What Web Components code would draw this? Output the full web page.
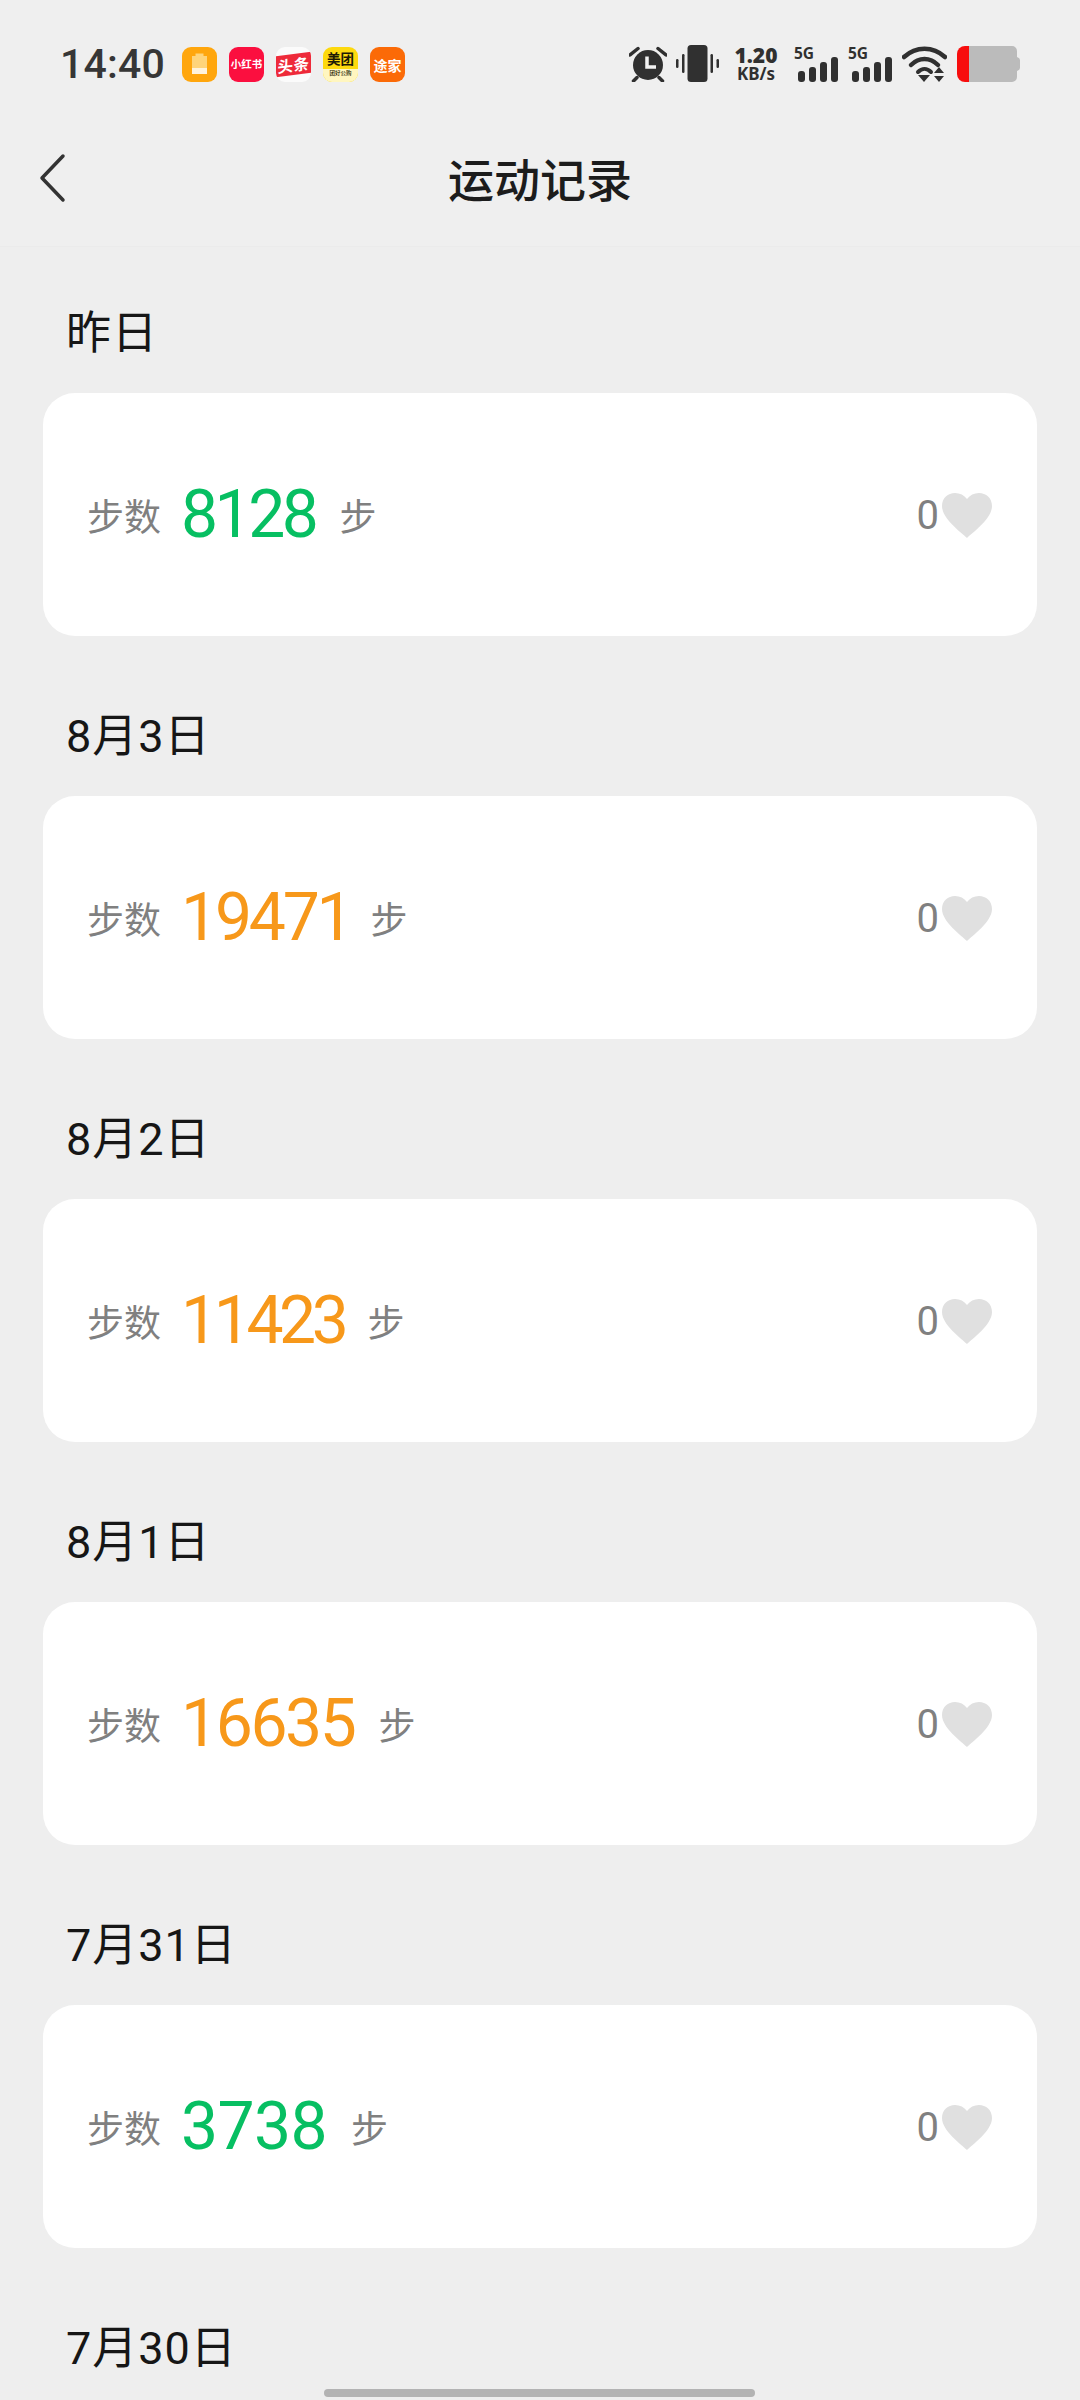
<!DOCTYPE html>
<html lang="zh"><head><meta charset="utf-8"><title>运动记录</title>
<style>
html,body{margin:0;padding:0;background:#eee}
body{width:1080px;height:2400px;overflow:hidden;position:relative;font-family:Roboto,"Noto Sans CJK SC",sans-serif}
</style></head><body>
<status-bar></status-bar>
<nav-bar>运动记录</nav-bar>
<main>
<day-section day="昨日" steps="8128" tone="green" track="-3.5" gap="24"></day-section>
<day-section day="8月3日" steps="19471" tone="orange" track="-3.2" gap="20"></day-section>
<day-section day="8月2日" steps="11423" tone="orange" track="-4.4" gap="23"></day-section>
<day-section day="8月1日" steps="16635" tone="orange" track="-2.4" gap="24"></day-section>
<day-section day="7月31日" steps="3738" tone="green" track="-0.6" gap="24"></day-section>
<day-section day="7月30日"></day-section>
</main>
<home-indicator></home-indicator>
<script>
const def=(name,html)=>customElements.define(name,class extends HTMLElement{
  connectedCallback(){
    if(this.shadowRoot)return;
    const r=this.attachShadow({mode:'open'});
    r.innerHTML=typeof html==='function'?html(this):html;
  }
});
def('app-icon',e=>`<style>
:host{display:flex;width:35px;height:35px;border-radius:9px;overflow:hidden;align-items:center;justify-content:center;flex-direction:column;font-family:"Noto Sans CJK SC",sans-serif;font-weight:700;line-height:1;white-space:nowrap;background:${e.getAttribute('bg')};color:${e.getAttribute('fg')||'#fff'};font-size:${e.getAttribute('fs')||'11px'}}
</style><slot></slot>`);
def('status-bar',`<style>
:host{display:flex;box-sizing:border-box;height:100px;padding:46px 60px 0 60px;align-items:flex-start;background:#efefef;color:#303030;font-family:"Noto Sans",sans-serif}
.time{font:500 41px/37px Roboto,sans-serif;width:122px;color:#363636;letter-spacing:.2px}
.apps{display:flex;gap:12px;margin-top:1px}
.right{margin-left:auto;display:flex;align-items:flex-start}
svg{display:block;flex:none}
.speed{width:44px;margin-left:15px;font-weight:700;text-align:center;white-space:nowrap;display:flex;flex-direction:column;margin-right:2px}
.speed b{font-size:21px;line-height:19px}
.speed i{font-style:normal;font-size:17px;line-height:17px}
.net{position:relative;width:42px;height:36px;margin-left:16px}
.net+.net{margin-left:12px}
.net span{position:absolute;left:-2px;top:-1px;font-size:15.5px;line-height:16px;font-weight:700}
.net svg{width:42px;height:36px}
.wifi{margin-left:10px}.bat{margin-left:10px}
.tt{display:flex;transform:skewY(-7deg);background:#ee2a3a;color:#fff;width:35px;height:21px;align-items:center;justify-content:center;font-size:15.500px;letter-spacing:.5px}
</style>
<div class="time">14:40</div>
<div class="apps">
<app-icon bg="#ffa60d"><svg width="35" height="35" viewBox="0 0 35 35"><path d="M10 9h3.500V6.500h8V9H25v18H10z" fill="#ffd47a"/><path d="M10 21h15v6H10z" fill="#fff3dc"/></svg></app-icon>
<app-icon bg="#fb0f3f" fs="10.500px">小红书</app-icon>
<app-icon bg="#fbfbfb"><div class="tt">头条</div></app-icon>
<app-icon bg="#fdd90e" fg="#1d1a05" fs="13.500px"><div style="margin-top:5px">美团</div><div style="font-size:5.500px;font-weight:500;background:#fff6c0;width:35px;text-align:center;margin-top:4px;padding:2px 0 6px">团好公购</div></app-icon>
<app-icon bg="#fb6a07" fs="14px">途家</app-icon>
</div>
<div class="right">
<svg width="38" height="36" viewBox="0 0 38 36" fill="#303030"><circle cx="19" cy="19" r="15"/><path d="M1 9 9 2.500M37 9 29 2.500M8 31.500 4.500 35M30 31.500 33.500 35" stroke="#303030" stroke-width="3.500" fill="none" stroke-linecap="round"/><path d="M18 10.500V21h9" stroke="#f2f2f2" stroke-width="3.500" fill="none"/></svg>
<svg width="43" height="37" viewBox="0 0 43 37" style="margin-left:9px;margin-top:-1px" fill="#303030"><rect x="11.500" y="0" width="20" height="37" rx="3.500"/><rect x="6" y="9" width="2.500" height="19" rx="1.200"/><rect x="34.500" y="9" width="2.500" height="19" rx="1.200"/><rect x="0" y="14" width="2.500" height="9" rx="1.200"/><rect x="40.500" y="14" width="2.500" height="9" rx="1.200"/></svg>
<div class="speed"><b>1.20</b><i>KB/s</i></div>
<div class="net"><span>5G</span><svg viewBox="0 0 42 36" fill="#303030"><rect x="2" y="25" width="7" height="11" rx="3"/><rect x="13" y="21" width="7" height="15" rx="3"/><rect x="24" y="16" width="7" height="20" rx="3"/><rect x="35" y="11" width="7" height="25" rx="3"/></svg></div>
<div class="net"><span>5G</span><svg viewBox="0 0 42 36" fill="#303030"><rect x="2" y="25" width="7" height="11" rx="3"/><rect x="13" y="21" width="7" height="15" rx="3"/><rect x="24" y="16" width="7" height="20" rx="3"/><rect x="35" y="11" width="7" height="25" rx="3"/></svg></div>
<svg class="wifi" width="45" height="36" viewBox="0 0 45 36" fill="none" stroke="#303030" stroke-width="4.500" stroke-linecap="round"><path d="M2 11C14 0 31 0 43 11"/><path d="M9 19C17 11 28 11 36 19"/><path d="M16 26C20 22 25 22 29 26" stroke-width="4"/><path d="M16 29h12l-6 7z" fill="#303030" stroke="none"/><path d="M36 21l5 6H31zM36 36l5-6H31z" fill="#303030" stroke="none" transform="translate(1 0)"/></svg>
<svg class="bat" width="63" height="36" viewBox="0 0 63 36"><path d="M10 0H55a5 5 0 0 1 5 5V11q3 1 3 3V22q0 2-3 3V31a5 5 0 0 1-5 5H10z" fill="#bbb"/><path d="M12 0H8a8 8 0 0 0-8 8V28a8 8 0 0 0 8 8h4z" fill="#f70d0d"/></svg>
</div>`);
def('nav-bar',`<style>
:host{display:flex;position:relative;box-sizing:border-box;height:147px;border-bottom:1px solid #ebebeb;background:#efefef;padding:7px 0 0;align-items:center;justify-content:center;font:500 46px/60px "Noto Sans CJK SC",sans-serif;color:#1c1c1c}
svg{position:absolute;left:38px;top:53px}
</style><svg width="30" height="50" viewBox="0 0 30 50" fill="none" stroke="#333" stroke-width="3.500" stroke-linecap="round" stroke-linejoin="round"><path d="M25 3 4 25l21 22"/></svg><slot></slot>`);
def('step-card',e=>`<style>
:host{display:flex;box-sizing:border-box;height:243px;background:#fff;border-radius:32px;padding:0 45px 0 44px;align-items:center;color:#808080;font-family:Roboto,"Noto Sans CJK SC",sans-serif}
.l{font:400 37px/50px "Noto Sans CJK SC",sans-serif}
.n{font:400 66px/80px Roboto,sans-serif;letter-spacing:${e.getAttribute('track')}px;margin:0 ${e.getAttribute('gap')}px 0 20px;color:${e.getAttribute('tone')==='green'?'#07bf62':'#f7981a'}}
.z{margin-left:auto;font:400 40px/50px Roboto,sans-serif;color:#808080;margin-top:2px}
svg{display:block;margin-left:3px;margin-top:2px}
</style><span class="l">步数</span><span class="n">${e.getAttribute('steps')}</span><span class="l">步</span><span class="z">0</span>
<svg width="50" height="45" viewBox="0 0 50 45"><path d="M25 45C20 40 0 26 0 13 0 5 6 0 13 0c5 0 9 2 12 6 3-4 7-6 12-6 7 0 13 5 13 13 0 13-20 27-25 32z" fill="#e0e0e0"/></svg>`);
def('day-section',e=>{
 const s=e.getAttribute('steps');
 return `<style>
:host{display:block;box-sizing:border-box;height:${s?'403px':'auto'};padding:57px 43px 0}
h2{margin:0 0 ${s?29:0}px 23px;font:400 45px/60px Roboto,"Noto Sans CJK SC",sans-serif;letter-spacing:1px;color:#161616}
</style><h2>${e.getAttribute('day')}</h2>${s?`<step-card steps="${s}" tone="${e.getAttribute('tone')}" track="${e.getAttribute('track')}" gap="${e.getAttribute('gap')}"></step-card>`:''}`});
def('home-indicator',`<style>
:host{display:block;position:absolute;left:324px;top:2389px;width:431px;height:8px;border-radius:4px;background:#b3b3b3}
</style>`);
</script>
</body></html>
